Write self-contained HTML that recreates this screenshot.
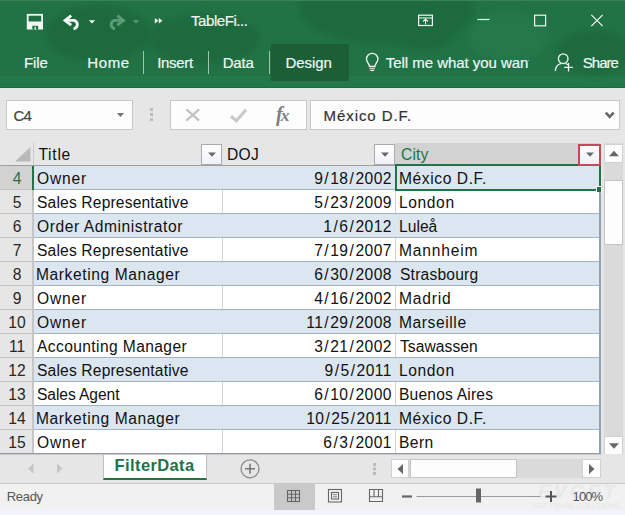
<!DOCTYPE html>
<html><head><meta charset="utf-8"><title>Excel</title><style>
*{margin:0;padding:0;box-sizing:border-box}
html,body{width:625px;height:515px;overflow:hidden;background:#e6e6e6;font-family:"Liberation Sans",sans-serif}
.a{position:absolute}
.t{position:absolute;white-space:nowrap;line-height:1}
#hdr{left:0;top:0;width:625px;height:88px;background:#217346;overflow:hidden}
.blob{position:absolute;border-radius:50%;background:#1e6a3f;filter:blur(3px)}
.ui{font-size:15px;color:#f0f6f2;-webkit-text-stroke-width:.2px}
.cell{font-size:15.6px;color:#111;}
.rn{font-size:15.6px;color:#222;text-align:center;width:33px;left:0}
.dt{letter-spacing:.47px;margin-right:-.47px}
.sl{padding:0 1.05px}
.btn{position:absolute;background:#fdfdfd;border:1px solid #c8c8c8}
</style></head><body>
<div class="a" id="hdr">
<div class="blob" style="left:45px;top:5px;width:105px;height:58px"></div>
<div class="blob" style="left:148px;top:14px;width:112px;height:50px"></div>
<div class="blob" style="left:300px;top:-25px;width:175px;height:70px"></div>
<div class="blob" style="left:556px;top:30px;width:80px;height:44px"></div>
<div class="blob" style="left:395px;top:10px;width:60px;height:40px"></div>
<div class="blob" style="left:468px;top:12px;width:80px;height:50px;background:#24784a"></div>
<div class="a" style="left:0;top:0;width:625px;height:1px;background:#3b8259"></div>
<div class="a" style="left:0;top:76px;width:625px;height:12px;background:rgba(40,130,80,.35)"></div>
<div class="a" style="left:271px;top:44px;width:78px;height:37px;background:#1c5f37"></div>
<div class="a" style="left:143px;top:51px;width:1px;height:23px;background:#9fc4ae"></div>
<div class="a" style="left:208px;top:51px;width:1px;height:23px;background:#9fc4ae"></div>
<div class="a" style="left:269px;top:51px;width:1px;height:23px;background:#9fc4ae"></div>
<div class="t ui" style="left:191px;top:13.3px;letter-spacing:-0.432px;margin-left:0.00px;">TableFi...</div>
<div class="t ui" style="left:25px;top:55.3px;letter-spacing:-0.076px;margin-left:-1.00px;">File</div>
<div class="t ui" style="left:88.3px;top:55.3px;letter-spacing:0.610px;margin-left:-1.00px;">Home</div>
<div class="t ui" style="left:158.2px;top:55.3px;letter-spacing:-0.309px;margin-left:-1.00px;">Insert</div>
<div class="t ui" style="left:223.7px;top:55.3px;letter-spacing:-0.181px;margin-left:-1.00px;">Data</div>
<div class="t ui" style="left:286.5px;top:55.3px;letter-spacing:-0.050px;margin-left:-1.00px;">Design</div>
<div class="a" style="left:380px;top:50px;width:148.6px;height:30px;overflow:hidden">
<div class="t ui" style="left:5.8px;top:5.3px;letter-spacing:-0.040px;margin-left:0.00px;">Tell me what you want</div>
</div>
<div class="t ui" style="left:582.8px;top:55.3px;letter-spacing:-0.971px;margin-left:0.00px;">Share</div>
<svg class="a" style="left:0;top:0" width="625" height="88" viewBox="0 0 625 88" fill="none" stroke="#f2f8f4" stroke-width="1.4">
<!-- save -->
<path d="M26.800 13.900h16.200v15.600h-16.200z" fill="#f2f8f4" stroke="none"/><path d="M28.600 15.700h12.600v5.800h-12.600z" fill="#1f6e42" stroke="none"/><path d="M32.300 25.800h5.900v3.700h-5.900z" fill="#217346" stroke="none"/><path d="M34.600 26.800h1.300v2.700h-1.300z" fill="#f2f8f4" stroke="none"/>
<!-- undo -->
<path d="M71.200 15.600l-6.200 4.800 6.200 4.800" stroke-width="2.800" stroke-linejoin="miter"/><path d="M66 20.400h8.300a5.600 4.600 0 0 1 0 8.200h-0.800" stroke-width="2.800"/>
<path d="M88.800 20.200h6.400l-3.200 3.200z" fill="#f2f8f4" stroke="none"/>
<!-- redo -->
<g stroke="#5c9d79"><path d="M117.300 15.600l6.200 4.800-6.200 4.800" stroke-width="2.800"/><path d="M122.500 20.400h-8.300a5.600 4.600 0 0 0 0 8.200h0.800" stroke-width="2.800"/>
<path d="M132.800 20.200h6.400l-3.200 3.200z" fill="#5c9d79" stroke="none"/></g>
<!-- >> -->
<path d="M154.800 18l3.700 2.700-3.700 2.700zM158.800 18l3.700 2.700-3.700 2.700z" fill="#f2f8f4" stroke="none"/>
<!-- ribbon display -->
<rect x="418.6" y="15.2" width="13.8" height="10.3" stroke-width="1.2"/><path d="M419 18h13M425.5 24.5v-5M423 21.5l2.5-2.3 2.5 2.3" stroke-width="1.1"/>
<!-- min max close -->
<path d="M477.5 19.5h12" stroke-width="1.2"/>
<rect x="534.6" y="15.2" width="11" height="10.6" stroke-width="1.2"/>
<path d="M591.3 14.8l11.4 11.4M602.7 14.8l-11.4 11.4" stroke-width="1.2"/>
<!-- bulb -->
<path d="M369.5 66.5c0-3-3-4-3-7.5a5.7 5.7 0 0 1 11.400 0c0 3.500-3 4.500-3 7.500z" stroke-width="1.3"/><path d="M369.500 68.700h5.400M370.300 70.500h3.800" stroke-width="1.100"/>
<!-- person+ -->
<circle cx="563.200" cy="58.700" r="4.800" stroke-width="1.300"/><path d="M555.300 71c.3-4.200 2.600-6.600 5.600-7.300M565.500 63.600c1.300.3 2.400.9 3.300 1.800" stroke-width="1.300"/><path d="M568.500 63v8.600M564.200 67.300h8.700" stroke-width="1.250"/>
</svg>
</div>
<div class="a" style="left:0;top:87px;width:625px;height:1px;background:#1d6a3f"></div>
<div class="a" style="left:0;top:88px;width:625px;height:1px;background:#dcece3"></div>
<div class="btn" style="left:6px;top:100px;width:127px;height:30px"></div>
<div class="btn" style="left:170px;top:100px;width:137px;height:30px"></div>
<div class="btn" style="left:310px;top:100px;width:310px;height:30px"></div>
<div class="t ui" style="left:13.6px;top:108px;letter-spacing:-0.933px;margin-left:0.00px;color:#444;font-size:15px">C4</div>
<div class="t ui" style="left:324.5px;top:108px;letter-spacing:0.932px;margin-left:-1.00px;color:#333;font-size:15px">México D.F.</div>
<svg class="a" style="left:0;top:88px" width="625" height="54" viewBox="0 88 625 54" fill="none">
<path d="M116.800 113h7.400l-3.700 4z" fill="#777"/>
<rect x="150" y="108" width="3" height="3" fill="#bcbcbc"/><rect x="150" y="113" width="3" height="3" fill="#bcbcbc"/><rect x="150" y="118" width="3" height="3" fill="#bcbcbc"/>
<path d="M186.300 109.300l12.800 11.400M199.100 109.300l-12.800 11.400" stroke="#c3c3c3" stroke-width="2.300"/>
<path d="M231 116.200l5.300 4.600 9.700-11" stroke="#c9c9c9" stroke-width="3.200"/>
<path d="M605.800 112.600l3.900 4.200 3.900-4.200" stroke="#666" stroke-width="2.600"/>
</svg>
<div class="t " style="left:276px;top:103.5px;font-family:'Liberation Serif',serif;font-size:20px;color:#808080;font-weight:bold"><i>f</i><i style="margin-left:-2px;font-size:17.5px">x</i></div>
<div class="a" style="left:34px;top:166px;width:566px;height:288px;background:#fff"></div>
<div class="a" style="left:395px;top:143px;width:205px;height:22px;background:#d2d2d2"></div>
<div class="a" style="left:0;top:166px;width:33px;height:23px;background:#d2d2d2"></div>
<div class="a" style="left:0;top:165px;width:600px;height:1px;background:#9f9f9f"></div>
<div class="a" style="left:33px;top:143px;width:1px;height:22px;background:#cbcbcb"></div>
<div class="a" style="left:32px;top:166px;width:2px;height:288px;background:#c6c6c6"></div>
<svg class="a" style="left:14px;top:146px" width="18" height="17"><path d="M16.500 1v14.500h-15.500z" fill="#b9b9b9"/></svg>
<div class="a" style="left:34px;top:166px;width:566px;height:23px;background:#dce6f1"></div>
<div class="a" style="left:34px;top:189px;width:566px;height:1px;background:#a1b3c9"></div>
<div class="a" style="left:0;top:189px;width:33px;height:1px;background:#c4c4c4"></div>
<div class="t rn" style="left:.5px;top:170.7px;color:#217346">4</div>
<div class="t cell" style="left:37px;top:170.7px;letter-spacing:0.816px;margin-left:0.00px;">Owner</div>
<div class="t cell dt" style="right:233.5px;top:170.7px">9<span class="sl">/</span>18<span class="sl">/</span>2002</div>
<div class="t cell" style="left:400px;top:170.7px;letter-spacing:0.588px;margin-left:-1.00px;">México D.F.</div>
<div class="a" style="left:222px;top:190px;width:1px;height:23px;background:#d4d4d4"></div>
<div class="a" style="left:395px;top:190px;width:1px;height:23px;background:#d4d4d4"></div>
<div class="a" style="left:34px;top:213px;width:566px;height:1px;background:#a1b3c9"></div>
<div class="a" style="left:0;top:213px;width:33px;height:1px;background:#c4c4c4"></div>
<div class="t rn" style="left:.5px;top:194.7px;color:#262626">5</div>
<div class="t cell" style="left:37px;top:194.7px;letter-spacing:0.171px;margin-left:0.00px;">Sales Representative</div>
<div class="t cell dt" style="right:233.5px;top:194.7px">5<span class="sl">/</span>23<span class="sl">/</span>2009</div>
<div class="t cell" style="left:400px;top:194.7px;letter-spacing:0.607px;margin-left:-1.00px;">London</div>
<div class="a" style="left:34px;top:214px;width:566px;height:23px;background:#dce6f1"></div>
<div class="a" style="left:34px;top:237px;width:566px;height:1px;background:#a1b3c9"></div>
<div class="a" style="left:0;top:237px;width:33px;height:1px;background:#c4c4c4"></div>
<div class="t rn" style="left:.5px;top:218.7px;color:#262626">6</div>
<div class="t cell" style="left:37px;top:218.7px;letter-spacing:0.564px;margin-left:0.00px;">Order Administrator</div>
<div class="t cell dt" style="right:233.5px;top:218.7px">1<span class="sl">/</span>6<span class="sl">/</span>2012</div>
<div class="t cell" style="left:400px;top:218.7px;letter-spacing:0.030px;margin-left:-1.00px;">Luleå</div>
<div class="a" style="left:222px;top:238px;width:1px;height:23px;background:#d4d4d4"></div>
<div class="a" style="left:395px;top:238px;width:1px;height:23px;background:#d4d4d4"></div>
<div class="a" style="left:34px;top:261px;width:566px;height:1px;background:#a1b3c9"></div>
<div class="a" style="left:0;top:261px;width:33px;height:1px;background:#c4c4c4"></div>
<div class="t rn" style="left:.5px;top:242.7px;color:#262626">7</div>
<div class="t cell" style="left:37px;top:242.7px;letter-spacing:0.171px;margin-left:0.00px;">Sales Representative</div>
<div class="t cell dt" style="right:233.5px;top:242.7px">7<span class="sl">/</span>19<span class="sl">/</span>2007</div>
<div class="t cell" style="left:400px;top:242.7px;letter-spacing:0.826px;margin-left:-1.00px;">Mannheim</div>
<div class="a" style="left:34px;top:262px;width:566px;height:23px;background:#dce6f1"></div>
<div class="a" style="left:34px;top:285px;width:566px;height:1px;background:#a1b3c9"></div>
<div class="a" style="left:0;top:285px;width:33px;height:1px;background:#c4c4c4"></div>
<div class="t rn" style="left:.5px;top:266.7px;color:#262626">8</div>
<div class="t cell" style="left:37px;top:266.7px;letter-spacing:0.584px;margin-left:-1.00px;">Marketing Manager</div>
<div class="t cell dt" style="right:233.5px;top:266.7px">6<span class="sl">/</span>30<span class="sl">/</span>2008</div>
<div class="t cell" style="left:400px;top:266.7px;letter-spacing:0.199px;margin-left:0.00px;">Strasbourg</div>
<div class="a" style="left:222px;top:286px;width:1px;height:23px;background:#d4d4d4"></div>
<div class="a" style="left:395px;top:286px;width:1px;height:23px;background:#d4d4d4"></div>
<div class="a" style="left:34px;top:309px;width:566px;height:1px;background:#a1b3c9"></div>
<div class="a" style="left:0;top:309px;width:33px;height:1px;background:#c4c4c4"></div>
<div class="t rn" style="left:.5px;top:290.7px;color:#262626">9</div>
<div class="t cell" style="left:37px;top:290.7px;letter-spacing:0.816px;margin-left:0.00px;">Owner</div>
<div class="t cell dt" style="right:233.5px;top:290.7px">4<span class="sl">/</span>16<span class="sl">/</span>2002</div>
<div class="t cell" style="left:400px;top:290.7px;letter-spacing:0.802px;margin-left:-1.00px;">Madrid</div>
<div class="a" style="left:34px;top:310px;width:566px;height:23px;background:#dce6f1"></div>
<div class="a" style="left:34px;top:333px;width:566px;height:1px;background:#a1b3c9"></div>
<div class="a" style="left:0;top:333px;width:33px;height:1px;background:#c4c4c4"></div>
<div class="t rn" style="left:.5px;top:314.7px;color:#262626">10</div>
<div class="t cell" style="left:37px;top:314.7px;letter-spacing:0.816px;margin-left:0.00px;">Owner</div>
<div class="t cell dt" style="right:233.5px;top:314.7px">11<span class="sl">/</span>29<span class="sl">/</span>2008</div>
<div class="t cell" style="left:400px;top:314.7px;letter-spacing:0.585px;margin-left:-1.00px;">Marseille</div>
<div class="a" style="left:222px;top:334px;width:1px;height:23px;background:#d4d4d4"></div>
<div class="a" style="left:395px;top:334px;width:1px;height:23px;background:#d4d4d4"></div>
<div class="a" style="left:34px;top:357px;width:566px;height:1px;background:#a1b3c9"></div>
<div class="a" style="left:0;top:357px;width:33px;height:1px;background:#c4c4c4"></div>
<div class="t rn" style="left:.5px;top:338.7px;color:#262626">11</div>
<div class="t cell" style="left:37px;top:338.7px;letter-spacing:0.392px;margin-left:0.00px;">Accounting Manager</div>
<div class="t cell dt" style="right:233.5px;top:338.7px">3<span class="sl">/</span>21<span class="sl">/</span>2002</div>
<div class="t cell" style="left:400px;top:338.7px;letter-spacing:0.067px;margin-left:0.00px;">Tsawassen</div>
<div class="a" style="left:34px;top:358px;width:566px;height:23px;background:#dce6f1"></div>
<div class="a" style="left:34px;top:381px;width:566px;height:1px;background:#a1b3c9"></div>
<div class="a" style="left:0;top:381px;width:33px;height:1px;background:#c4c4c4"></div>
<div class="t rn" style="left:.5px;top:362.7px;color:#262626">12</div>
<div class="t cell" style="left:37px;top:362.7px;letter-spacing:0.171px;margin-left:0.00px;">Sales Representative</div>
<div class="t cell dt" style="right:233.5px;top:362.7px">9<span class="sl">/</span>5<span class="sl">/</span>2011</div>
<div class="t cell" style="left:400px;top:362.7px;letter-spacing:0.607px;margin-left:-1.00px;">London</div>
<div class="a" style="left:222px;top:382px;width:1px;height:23px;background:#d4d4d4"></div>
<div class="a" style="left:395px;top:382px;width:1px;height:23px;background:#d4d4d4"></div>
<div class="a" style="left:34px;top:405px;width:566px;height:1px;background:#a1b3c9"></div>
<div class="a" style="left:0;top:405px;width:33px;height:1px;background:#c4c4c4"></div>
<div class="t rn" style="left:.5px;top:386.7px;color:#262626">13</div>
<div class="t cell" style="left:37px;top:386.7px;letter-spacing:-0.076px;margin-left:0.00px;">Sales Agent</div>
<div class="t cell dt" style="right:233.5px;top:386.7px">6<span class="sl">/</span>10<span class="sl">/</span>2000</div>
<div class="t cell" style="left:400px;top:386.7px;letter-spacing:0.186px;margin-left:-1.00px;">Buenos Aires</div>
<div class="a" style="left:34px;top:406px;width:566px;height:23px;background:#dce6f1"></div>
<div class="a" style="left:34px;top:429px;width:566px;height:1px;background:#a1b3c9"></div>
<div class="a" style="left:0;top:429px;width:33px;height:1px;background:#c4c4c4"></div>
<div class="t rn" style="left:.5px;top:410.7px;color:#262626">14</div>
<div class="t cell" style="left:37px;top:410.7px;letter-spacing:0.584px;margin-left:-1.00px;">Marketing Manager</div>
<div class="t cell dt" style="right:233.5px;top:410.7px">10<span class="sl">/</span>25<span class="sl">/</span>2011</div>
<div class="t cell" style="left:400px;top:410.7px;letter-spacing:0.588px;margin-left:-1.00px;">México D.F.</div>
<div class="a" style="left:222px;top:430px;width:1px;height:23px;background:#d4d4d4"></div>
<div class="a" style="left:395px;top:430px;width:1px;height:23px;background:#d4d4d4"></div>
<div class="a" style="left:34px;top:453px;width:566px;height:1px;background:#a1b3c9"></div>
<div class="a" style="left:0;top:453px;width:33px;height:1px;background:#c4c4c4"></div>
<div class="t rn" style="left:.5px;top:434.7px;color:#262626">15</div>
<div class="t cell" style="left:37px;top:434.7px;letter-spacing:0.816px;margin-left:0.00px;">Owner</div>
<div class="t cell dt" style="right:233.5px;top:434.7px">6<span class="sl">/</span>3<span class="sl">/</span>2001</div>
<div class="t cell" style="left:400px;top:434.7px;letter-spacing:0.411px;margin-left:-1.00px;">Bern</div>
<div class="t cell" style="left:38.4px;top:146.5px;letter-spacing:0.748px;margin-left:0.00px;">Title</div>
<div class="t cell" style="left:228px;top:146.5px;letter-spacing:0.305px;margin-left:-1.00px;">DOJ</div>
<div class="t cell" style="left:401px;top:146.5px;letter-spacing:0.147px;margin-left:0.00px;color:#217346">City</div>
<div class="a" style="left:395px;top:164px;width:205.5px;height:27px;border:2px solid #217346"></div>
<div class="a" style="left:32px;top:166px;width:2px;height:24px;background:#217346"></div>
<div class="a" style="left:596px;top:186px;width:6px;height:7px;background:#fff"></div>
<div class="a" style="left:597px;top:187px;width:4px;height:5px;background:#217346"></div>
<div class="a" style="left:201px;top:144px;width:21px;height:21px;border:1px solid #ababab;background:linear-gradient(#fff,#f0f2f6)"></div>
<svg class="a" style="left:207.5px;top:152px" width="8" height="5"><path d="M0 .5h8l-4 4.200z" fill="#686868"/></svg>
<div class="a" style="left:374px;top:144px;width:21px;height:21px;border:1px solid #ababab;background:linear-gradient(#fff,#f0f2f6)"></div>
<svg class="a" style="left:380.5px;top:152px" width="8" height="5"><path d="M0 .5h8l-4 4.200z" fill="#686868"/></svg>
<div class="a" style="left:578px;top:144px;width:23px;height:22px;border:2px solid #c8475b;background:linear-gradient(#fff,#eef0f6)"></div>
<svg class="a" style="left:585.5px;top:152px" width="8" height="5"><path d="M0 .5h8l-4 4.200z" fill="#686868"/></svg>
<div class="a" style="left:599px;top:192px;width:2px;height:262px;background:#93a1b4"></div>
<div class="a" style="left:0;top:453px;width:601px;height:1px;background:#929aa5"></div>
<div class="a" style="left:0;top:454px;width:601px;height:1px;background:#c9c9c9;z-index:3"></div>
<div class="a" style="left:604px;top:143px;width:19px;height:311px;background:#dadada"></div>
<div class="btn" style="left:604px;top:144px;width:19px;height:19px;border-color:#d0d0d0"></div>
<div class="btn" style="left:604px;top:436px;width:19px;height:19px;border-color:#d0d0d0"></div>
<div class="btn" style="left:604px;top:180px;width:19px;height:65px;border-color:#c4c4c4"></div>
<svg class="a" style="left:608.500px;top:150px" width="11" height="7"><path d="M0 6.200h10l-5-5.400z" fill="#666"/></svg>
<svg class="a" style="left:608.500px;top:443px" width="11" height="7"><path d="M0 .3h10l-5 5.400z" fill="#666"/></svg>
<div class="a" style="left:0;top:454px;width:625px;height:29px;background:#e6e6e6"></div>
<div class="a" style="left:103px;top:454px;width:104px;height:26px;background:#fff;border-left:1px solid #c0c0c0;border-right:1px solid #c0c0c0;border-bottom:2px solid #217346"></div>
<div class="t " style="left:115.6px;top:457px;letter-spacing:0.386px;margin-left:-1.00px;font-weight:bold;font-size:16.500px;color:#217346">FilterData</div>
<svg class="a" style="left:0;top:454px" width="625" height="30" viewBox="0 454 625 30" fill="none">
<path d="M33.500 463.500v10l-5.500-5zM57 463.500v10l5.500-5z" fill="#c6c6c6"/>
<circle cx="250" cy="468.800" r="9" stroke="#8a8a8a" stroke-width="1.300"/><path d="M245 468.800h10M250 463.800v10" stroke="#777" stroke-width="1.600"/>
<rect x="373" y="463" width="3" height="3" fill="#bcbcbc"/><rect x="373" y="467.500" width="3" height="3" fill="#bcbcbc"/><rect x="373" y="472" width="3" height="3" fill="#bcbcbc"/>
</svg>
<div class="a" style="left:391px;top:459px;width:210px;height:19px;background:#dadada"></div>
<div class="btn" style="left:391px;top:459px;width:18px;height:19px;border-color:#d0d0d0"></div>
<div class="btn" style="left:582px;top:459px;width:19px;height:19px;border-color:#d0d0d0"></div>
<div class="btn" style="left:410px;top:459px;width:107px;height:19px;border-color:#c4c4c4"></div>
<svg class="a" style="left:397px;top:463.500px" width="7" height="11"><path d="M6 0v10l-5.500-5z" fill="#666"/></svg>
<svg class="a" style="left:589px;top:463.500px" width="7" height="11"><path d="M0 0v10l5.500-5z" fill="#666"/></svg>
<div class="a" style="left:0;top:483px;width:625px;height:1px;background:#c8c8c8"></div>
<div class="a" style="left:0;top:484px;width:625px;height:26px;background:#f1f1f1"></div>
<div class="a" style="left:0;top:510px;width:625px;height:5px;background:#f1f3fa"></div>
<div class="a" style="left:274px;top:484px;width:41px;height:26px;background:#c9c9c9"></div>
<div class="t" style="left:538px;top:483px;font-size:18.5px;font-weight:bold;font-style:italic;color:#e8e8e8;letter-spacing:3.6px">EVGET</div>
<div class="t" style="left:533px;top:502px;font-size:7.4px;font-style:italic;color:#e6e6e6;letter-spacing:0">SOFTWARE SOLUTIONS</div>
<div class="t " style="left:7.8px;top:490px;letter-spacing:-0.320px;margin-left:-1.00px;font-size:13px;color:#555">Ready</div>
<div class="t " style="left:572.6px;top:490px;letter-spacing:-0.897px;margin-left:0.00px;font-size:13px;color:#555">100%</div>
<svg class="a" style="left:0;top:484px" width="625" height="26" viewBox="0 484 625 26" fill="none" stroke="#666" stroke-width="1.100">
<rect x="287.500" y="490.500" width="12" height="11"/><path d="M291.500 490.500v11M295.500 490.500v11M287.500 494.200h12M287.500 497.800h12"/>
<rect x="328.500" y="489.500" width="13" height="12.500"/><rect x="331.500" y="492.500" width="7" height="6.500"/><path d="M333 494.700h4M333 496.800h4" stroke-width=".8"/>
<path d="M369.500 489.500h13v12h-13zM369.500 496.800h13M374 489.500v7.300M378.500 489.500v7.300" />
<path d="M402 496.500h10" stroke-width="2.200" stroke="#666"/>
<path d="M416.500 496.500h124" stroke="#9a9a9a" stroke-width="1"/>
<rect x="476" y="488.500" width="5" height="14" fill="#666" stroke="none"/>
<path d="M545.500 496.500h11M551 491v11" stroke-width="2" stroke="#555"/>
</svg>
</body></html>
